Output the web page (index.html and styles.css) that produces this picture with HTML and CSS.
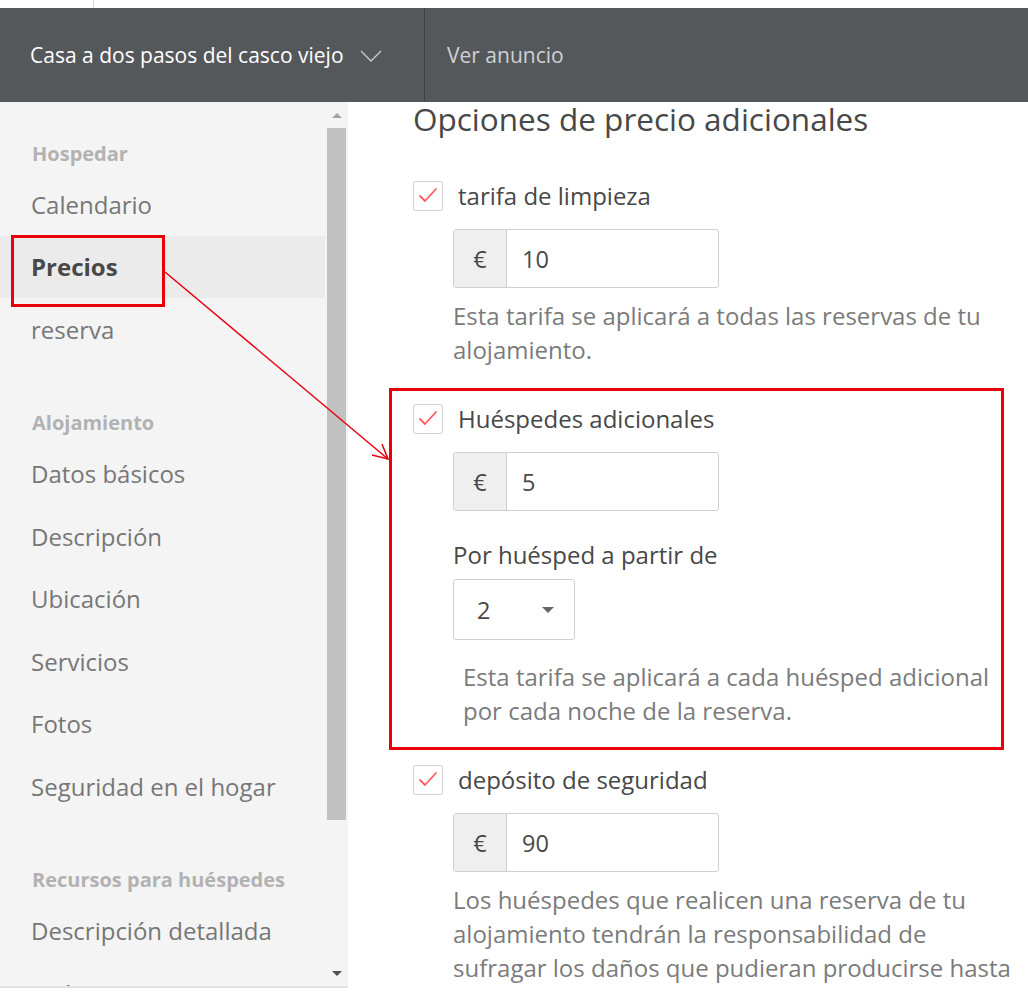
FILE: index.html
```html
<!DOCTYPE html>
<html lang="es">
<head>
  <meta charset="UTF-8">
  <meta name="viewport" content="width=device-width, initial-scale=1.0">
  <title>Precios - Casa a dos pasos del casco viejo</title>
  <link rel="stylesheet" href="styles.css">
</head>
<body>
  <div class="top-strip"><span class="tab-edge"></span></div>

  <header class="topbar">
    <div class="listing">
      <span>Casa a dos pasos del casco viejo</span>
      <svg class="chevron" width="22" height="12" viewBox="0 0 22 12">
        <polyline points="1,1 11,11 21,1" fill="none" stroke="#c9cbcd" stroke-width="1.3"/>
      </svg>
    </div>
    <div class="view-link">Ver anuncio</div>
  </header>

  <div class="layout">
    <aside class="sidebar">
      <nav class="nav">
        <div class="group">
          <div class="group-title">Hospedar</div>
          <div class="nav-item">Calendario</div>
          <div class="nav-item active">Precios</div>
          <div class="nav-item">reserva</div>
        </div>
        <div class="group">
          <div class="group-title">Alojamiento</div>
          <div class="nav-item">Datos básicos</div>
          <div class="nav-item">Descripción</div>
          <div class="nav-item">Ubicación</div>
          <div class="nav-item">Servicios</div>
          <div class="nav-item">Fotos</div>
          <div class="nav-item">Seguridad en el hogar</div>
        </div>
        <div class="group">
          <div class="group-title">Recursos para huéspedes</div>
          <div class="nav-item">Descripción detallada</div>
          <div class="nav-item">Guías</div>
        </div>
      </nav>
      <div class="scrollbar">
        <div class="scroll-btn"><span class="arrow-up"></span></div>
        <div class="scroll-thumb"></div>
        <div class="scroll-btn bottom"><span class="arrow-down"></span></div>
      </div>
    </aside>

    <main class="content">
      <h2 class="section-title">Opciones de precio adicionales</h2>

      <section class="fee">
        <label class="fee-check">
          <span class="checkbox">
            <svg width="30" height="30" viewBox="0 0 30 30"><polyline points="7,15 12,20 23,8" fill="none" stroke="#ff5a5f" stroke-width="1.8" stroke-linecap="round" stroke-linejoin="round"/></svg>
          </span>
          <span>tarifa de limpieza</span>
        </label>
        <div class="fee-body">
          <div class="input-group">
            <span class="addon">€</span>
            <span class="value">10</span>
          </div>
          <p class="help">Esta tarifa se aplicará a todas las reservas de tu alojamiento.</p>
        </div>
      </section>

      <section class="fee">
        <label class="fee-check">
          <span class="checkbox">
            <svg width="30" height="30" viewBox="0 0 30 30"><polyline points="7,15 12,20 23,8" fill="none" stroke="#ff5a5f" stroke-width="1.8" stroke-linecap="round" stroke-linejoin="round"/></svg>
          </span>
          <span>Huéspedes adicionales</span>
        </label>
        <div class="fee-body">
          <div class="input-group">
            <span class="addon">€</span>
            <span class="value">5</span>
          </div>
          <div class="field-label">Por huésped a partir de</div>
          <div class="select">
            <span>2</span>
            <span class="caret"></span>
          </div>
          <p class="help indented">Esta tarifa se aplicará a cada huésped adicional por cada noche de la reserva.</p>
        </div>
      </section>

      <section class="fee">
        <label class="fee-check">
          <span class="checkbox">
            <svg width="30" height="30" viewBox="0 0 30 30"><polyline points="7,15 12,20 23,8" fill="none" stroke="#ff5a5f" stroke-width="1.8" stroke-linecap="round" stroke-linejoin="round"/></svg>
          </span>
          <span>depósito de seguridad</span>
        </label>
        <div class="fee-body">
          <div class="input-group">
            <span class="addon">€</span>
            <span class="value">90</span>
          </div>
          <p class="help">Los huéspedes que realicen una reserva de tu alojamiento tendrán la responsabilidad de sufragar los daños que pudieran producirse hasta el importe indicado.</p>
        </div>
      </section>
    </main>
  </div>

  <!-- annotation marks drawn over the screenshot -->
  <svg class="annotations" width="1028" height="993" viewBox="0 0 1028 993">
    <rect x="12.5" y="236.5" width="151" height="69" fill="none" stroke="#e8000b" stroke-width="3"/>
    <rect x="390.5" y="389.5" width="612" height="359" fill="none" stroke="#e8000b" stroke-width="3"/>
    <line x1="165" y1="272" x2="388" y2="459" stroke="#e8000b" stroke-width="1.5"/>
    <polyline points="382,444 388,459 372,455" fill="none" stroke="#e8000b" stroke-width="1.5"/>
  </svg>
</body>
</html>
```

FILE: styles.css
```css
* {
  box-sizing: border-box;
  margin: 0;
  padding: 0;
}

body {
  font-family: "Open Sans", Roboto, sans-serif;
  background: #fff;
  color: #484848;
  width: 1028px;
  height: 993px;
  overflow: hidden;
  position: relative;
}

.top-strip {
  height: 8px;
  background: #fff;
}

.tab-edge {
  display: block;
  margin-left: 93px;
  width: 1px;
  height: 8px;
  background: #dcdcdc;
}

.topbar {
  display: flex;
  height: 94px;
  background: #55585b;
}

.listing {
  display: flex;
  align-items: center;
  gap: 16px;
  width: 425px;
  padding-left: 30px;
  border-right: 1px solid #3e4144;
  color: #fff;
  font-size: 21px;
}

.chevron {
  margin-top: 1px;
}

.view-link {
  display: flex;
  align-items: center;
  padding-left: 22px;
  color: #cfd1d3;
  font-size: 21px;
}

.layout {
  display: flex;
  align-items: flex-start;
  height: 891px;
}

/* sidebar */
.sidebar {
  display: flex;
  width: 348px;
  height: 886px;
  background: #f4f4f4;
  border-bottom: 2px solid #e2e2e2;
  flex-shrink: 0;
}

.nav {
  width: 325px;
  padding-top: 31px;
  overflow: hidden;
}

.group {
  margin-bottom: 42px;
}

.group-title {
  display: flex;
  align-items: center;
  height: 40px;
  padding-left: 32px;
  font-size: 20px;
  font-weight: 700;
  color: #b2b2b2;
}

.nav-item {
  display: flex;
  align-items: center;
  height: 62.5px;
  padding-left: 31px;
  font-size: 24px;
  color: #777;
}

.nav-item.active {
  background: #ebebeb;
  color: #484848;
  font-weight: 700;
}

.scrollbar {
  display: flex;
  flex-direction: column;
  width: 23px;
  background: #f4f4f4;
}

.scroll-btn {
  display: flex;
  justify-content: center;
  align-items: center;
  height: 26px;
}

.scroll-btn.bottom {
  margin-top: auto;
}

.arrow-up {
  border-left: 5px solid transparent;
  border-right: 5px solid transparent;
  border-bottom: 5px solid #a3a3a3;
}

.arrow-down {
  border-left: 5px solid transparent;
  border-right: 5px solid transparent;
  border-top: 5px solid #505050;
}

.scroll-thumb {
  height: 692px;
  margin: 0 2px;
  background: #c1c1c1;
}

/* content */
.content {
  flex: 1;
  height: 891px;
  overflow: hidden;
  padding-left: 65px;
}

.section-title {
  font-size: 31.5px;
  font-weight: 400;
  line-height: 34px;
  color: #484848;
  margin-bottom: 45px;
}

.fee {
  margin-bottom: 37px;
}

.fee-check {
  display: flex;
  align-items: center;
  gap: 15px;
  font-size: 24px;
  line-height: 30px;
  color: #484848;
}

.checkbox {
  display: block;
  flex-shrink: 0;
  width: 30px;
  height: 30px;
  border: 1px solid #d2d2d2;
  border-radius: 3px;
  background: #fff;
}

.checkbox svg {
  display: block;
  margin: -1px;
}

.fee-body {
  padding-left: 40px;
}

.input-group {
  display: flex;
  width: 266px;
  height: 59px;
  margin-top: 18px;
  border: 1px solid #cfcfcf;
  border-radius: 3px;
  font-size: 23.5px;
  overflow: hidden;
}

.addon {
  display: flex;
  align-items: center;
  justify-content: center;
  width: 53px;
  background: #efefef;
  border-right: 1px solid #cfcfcf;
  color: #484848;
}

.value {
  display: flex;
  align-items: center;
  padding-left: 15px;
  color: #484848;
}

.help {
  margin-top: 11px;
  max-width: 565px;
  font-size: 24px;
  line-height: 34px;
  color: #7b7b7b;
}

.help.indented {
  margin-top: 20px;
  padding-left: 10px;
}

.field-label {
  margin-top: 27px;
  font-size: 24px;
  line-height: 34px;
  color: #484848;
}

.select {
  display: flex;
  align-items: center;
  justify-content: space-between;
  width: 122px;
  height: 61px;
  margin-top: 7px;
  padding: 0 20px 0 23px;
  border: 1px solid #cfcfcf;
  border-radius: 3px;
  font-size: 23.5px;
  color: #484848;
}

.caret {
  border-left: 6px solid transparent;
  border-right: 6px solid transparent;
  border-top: 6px solid #666;
}

.annotations {
  position: absolute;
  top: 0;
  left: 0;
  pointer-events: none;
}
```
